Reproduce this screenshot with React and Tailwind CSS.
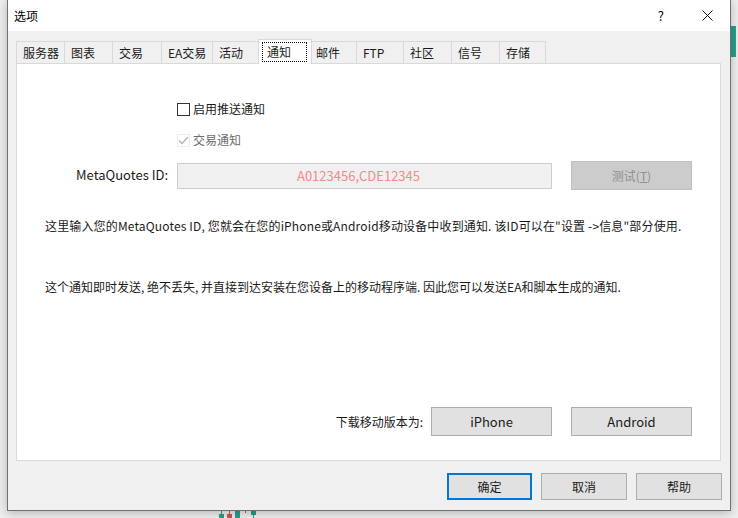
import React from "react";

const tabs = [
  { label: "服务器", w: 48 },
  { label: "图表", w: 48 },
  { label: "交易", w: 49 },
  { label: "EA交易", w: 51 },
  { label: "活动", w: 47 },
  { label: "通知", w: 50, active: true },
  { label: "邮件", w: 47 },
  { label: "FTP", w: 47 },
  { label: "社区", w: 48 },
  { label: "信号", w: 48 },
  { label: "存储", w: 46 },
];

function Tab({ t }) {
  if (t.active) {
    return (
      <div
        className="relative z-10 -mx-[2px] h-[25px] -mb-[1px] self-end border border-b-0 border-[#d9d9d9] bg-white pl-[3px] pt-[2px]"
        style={{ width: t.w + 4 }}
      >
        <div className="flex h-[20px] w-[45px] items-center border border-dotted border-black pl-[4px] leading-none">
          {t.label}
        </div>
      </div>
    );
  }
  return (
    <div
      className="flex h-[22px] items-center border border-b-0 border-[#d9d9d9] pl-[6px] pt-[1px] -ml-[1px] first:ml-0"
      style={{ width: t.w + 1 }}
    >
      {t.label}
    </div>
  );
}

export default function App() {
  return (
    <div className="relative h-[518px] w-[738px] overflow-hidden bg-[#efefef] font-['Noto_Sans_CJK_SC','Microsoft_YaHei',sans-serif] text-[12px] text-[#1a1a1a]">
      {/* background chart bits */}
      <div className="absolute left-[731px] top-[26px] h-[31px] w-[5px] bg-[#26a18a]" />
      <svg className="absolute left-[215px] top-[508px]" width="48" height="10" viewBox="0 0 48 10">
        <line x1="6.5" y1="2" x2="6.5" y2="10" stroke="#26a18a" />
        <rect x="4" y="6" width="5" height="4" fill="#26a18a" />
        <line x1="14.5" y1="2" x2="14.5" y2="10" stroke="#d9534f" />
        <rect x="12" y="6" width="5" height="4" fill="#d9534f" />
        <rect x="20" y="2" width="5" height="8" fill="#26a18a" />
        <line x1="30.5" y1="2" x2="30.5" y2="5" stroke="#d9534f" />
        <line x1="28" y1="2.5" x2="33" y2="2.5" stroke="#d9534f" />
        <rect x="36" y="2" width="5" height="5" fill="#26a18a" />
        <line x1="38.5" y1="7" x2="38.5" y2="10" stroke="#26a18a" />
      </svg>

      {/* dialog window */}
      <div className="absolute left-[7px] top-[-1px] flex h-[512px] w-[724px] flex-col border border-[#707070] bg-[#f0f0f0] shadow-[0_2px_10px_rgba(0,0,0,0.25)]">
        {/* title bar */}
        <div className="flex h-[31px] shrink-0 items-center bg-white">
          <span className="pl-[6px] pt-[1px] text-[12px] text-black">选项</span>
          <div className="ml-auto flex items-center">
            <span className="mr-[38px] text-[13px] text-black">?</span>
            <svg width="11" height="11" viewBox="0 0 11 11" className="mr-[17px]">
              <path d="M0.5 0.5 L10.5 10.5 M10.5 0.5 L0.5 10.5" stroke="#111" strokeWidth="1" />
            </svg>
          </div>
        </div>

        {/* body */}
        <div className="flex flex-1 flex-col px-[8px] pt-[8px]">
          {/* tabs */}
          <div className="flex h-[24px] items-end">
            {tabs.map((t) => (
              <Tab key={t.label} t={t} />
            ))}
          </div>

          {/* panel */}
          <div className="flex h-[398px] w-[705px] flex-col border border-[#d9d9d9] bg-white">
            {/* checkbox 1 */}
            <div className="mt-[35px] flex h-[20px] items-center pl-[160px]">
              <div className="h-[13px] w-[13px] border border-[#333] bg-white" />
              <span className="ml-[3px]">启用推送通知</span>
            </div>
            {/* checkbox 2 */}
            <div className="mt-[11px] flex h-[20px] items-center pl-[160px]">
              <svg width="13" height="13" viewBox="0 0 13 13">
                <rect x="0.5" y="0.5" width="12" height="12" fill="none" stroke="#ececec" />
                <path d="M2 6.5 L5 9.5 L11 3" fill="none" stroke="#b5b5b5" strokeWidth="1.3" />
              </svg>
              <span className="ml-[3px] text-[#6d6d6d]">交易通知</span>
            </div>
            {/* ID row */}
            <div className="mt-[11px] flex h-[29px] items-center">
              <div className="w-[151px] pb-[2px] text-right text-[13px]">MetaQuotes ID:</div>
              <div className="ml-[9px] flex h-[26px] w-[375px] items-center justify-center border border-[#cccccc] bg-[#f0f0f0] pr-[12px] text-[13px] text-[#f08c8c]">
                A0123456,CDE12345
              </div>
              <div className="ml-[19px] flex h-[29px] w-[121px] items-center justify-center border border-[#bfbfbf] bg-[#cccccc] text-[#8f8f8f]">
                测试(<span className="underline">T</span>)
              </div>
            </div>
            {/* paragraphs */}
            <p className="mt-[26px] whitespace-nowrap pl-[28px] leading-[20px] tracking-[0.15px]">
              这里输入您的MetaQuotes ID, 您就会在您的iPhone或Android移动设备中收到通知. 该ID可以在"设置 -&gt;信息"部分使用.
            </p>
            <p className="mt-[41px] whitespace-nowrap pl-[28px] leading-[20px]">
              这个通知即时发送, 绝不丢失, 并直接到达安装在您设备上的移动程序端. 因此您可以发送EA和脚本生成的通知.
            </p>
            {/* bottom download row */}
            <div className="mb-[24px] mt-auto flex h-[29px] items-center justify-end pr-[28px]">
              <span className="mr-[8px]">下载移动版本为:</span>
              <div className="flex h-[29px] w-[121px] items-center justify-center border border-[#adadad] bg-[#e1e1e1] text-[13px]">
                iPhone
              </div>
              <div className="ml-[19px] flex h-[29px] w-[121px] items-center justify-center border border-[#adadad] bg-[#e1e1e1] text-[13px]">
                Android
              </div>
            </div>
          </div>

          {/* dialog buttons */}
          <div className="mt-[12px] flex justify-end gap-[9px]">
            <div className="flex h-[27px] w-[85px] items-center justify-center border-2 border-[#0078d7] bg-[#e1e1e1]">
              确定
            </div>
            <div className="flex h-[27px] w-[86px] items-center justify-center border border-[#adadad] bg-[#e1e1e1]">
              取消
            </div>
            <div className="flex h-[27px] w-[86px] items-center justify-center border border-[#adadad] bg-[#e1e1e1]">
              帮助
            </div>
          </div>
        </div>
      </div>
    </div>
  );
}
